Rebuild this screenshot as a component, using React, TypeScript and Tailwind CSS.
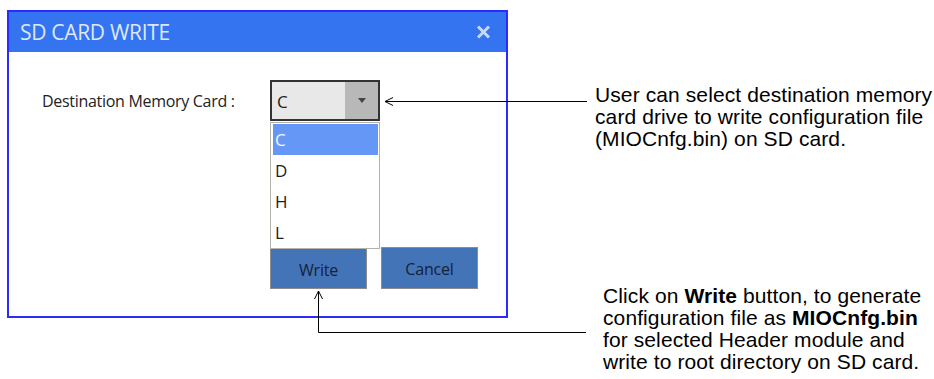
const ui = { fontFamily: '"Open Sans", "Noto Sans", sans-serif' };
const arial = { fontFamily: '"Liberation Sans", Arial, sans-serif' };

const drives = ["C", "D", "H", "L"];

function DriveSelect() {
  return (
    <div className="relative w-[110px] h-[41px] border-2 border-[#333333] bg-[#e8e8e8] flex">
      <span className="pl-[5px] pt-[3px] flex items-center text-[17px] text-[#1c1c1c]">C</span>
      <div className="ml-auto w-[33px] bg-[#b8b8b8] flex items-center justify-center">
        <svg width="8" height="5" viewBox="0 0 8 5">
          <path d="M0 0h8L4 5z" fill="#444444" />
        </svg>
      </div>
      {/* open dropdown list */}
      <div className="absolute z-10 top-[40px] left-[-2px] w-[110px] h-[127px] border border-[#b5b1ab] bg-white pt-[1px] pl-[2px] pr-[1px]">
        {drives.map((d, i) => (
          <div
            key={d}
            className={
              i === 0
                ? "h-[31px] flex items-center pl-[2px] pt-[1px] text-[17px] bg-[#6497f6] text-[#f4f8ff]"
                : "h-[31px] flex items-center pl-[2px] pt-[1px] text-[17px] text-[#1c1c1c]"
            }
          >
            {d}
          </div>
        ))}
      </div>
    </div>
  );
}

function SdCardDialog() {
  return (
    <div className="ml-[7px] mt-[10px] w-[501px] h-[308px] border-2 border-[#2b2bff] bg-white flex flex-col shrink-0" style={ui}>
      <div className="h-[40px] bg-[#3574f0] flex items-center justify-between pl-[11px] pr-[15px]">
        <span className="text-[21px] text-[#dfe8fd] tracking-[-0.3px] pt-[1px]">SD CARD WRITE</span>
        <svg width="15" height="14" viewBox="0 0 15 14">
          <path d="M2 1.5l11 11M13 1.5l-11 11" stroke="#c9d9fb" strokeWidth="3" />
        </svg>
      </div>
      <div className="flex-1 pt-[28px] pl-[33px]">
        <div className="flex items-center">
          <span className="w-[228px] text-[16px] text-[#222222] tracking-[-0.3px]">Destination Memory Card :</span>
          <DriveSelect />
        </div>
        <div className="flex gap-[14px] ml-[228px] mt-[126px]">
          <button className="w-[97px] h-[42px] pt-[4px] bg-[#4374b7] border border-[#8c8c8c] text-[16px] text-[#16213a] tracking-[-0.2px]">Write</button>
          <button className="w-[97px] h-[42px] pt-[2px] bg-[#4374b7] border border-[#8c8c8c] text-[16px] text-[#16213a] tracking-[-0.2px]">Cancel</button>
        </div>
      </div>
    </div>
  );
}

export default function App() {
  return (
    <div className="relative w-[934px] h-[379px] bg-white flex overflow-hidden">
      <SdCardDialog />
      <div className="flex flex-col ml-[87px] text-[21px] leading-[22px] text-black whitespace-nowrap tracking-[0.1px]" style={arial}>
        <p className="mt-[84px]">
          User can select destination memory
          <br />
          card drive to write configuration file
          <br />
          (MIOCnfg.bin) on SD card.
        </p>
        <p className="mt-[135px] ml-[8px]">
          Click on <b>Write</b> button, to generate
          <br />
          configuration file as <b>MIOCnfg.bin</b>
          <br />
          for selected Header module and
          <br />
          write to root directory on SD card.
        </p>
      </div>
      {/* callout arrows */}
      <svg className="absolute inset-0 z-20 pointer-events-none" width="934" height="379" viewBox="0 0 934 379">
        <g stroke="#000000" strokeWidth="1" fill="none">
          <path d="M587 101.5H385" />
          <path d="M393 97.5L385 101.5L393 105.5" />
          <path d="M586 332.5H318.5V291" />
          <path d="M314.5 299L318.5 291L322.5 299" />
        </g>
      </svg>
    </div>
  );
}
